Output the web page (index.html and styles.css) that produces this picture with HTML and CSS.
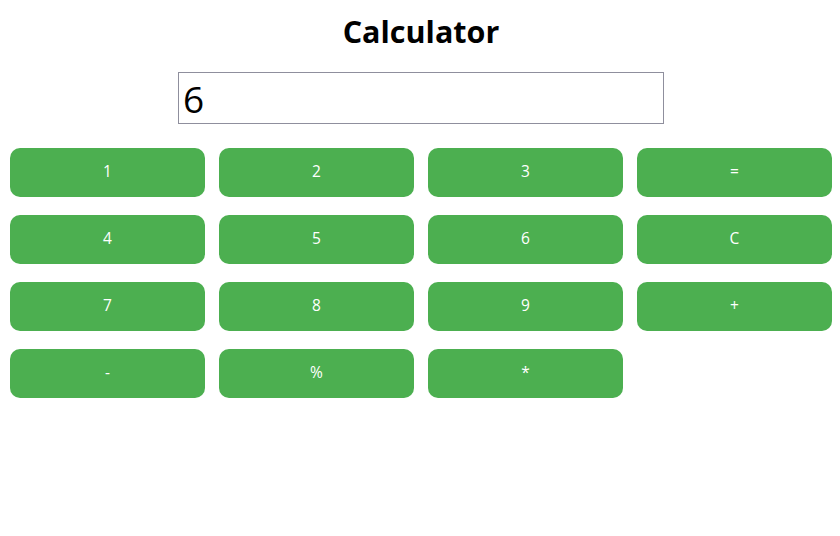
FILE: index.html
```html
<!DOCTYPE html>
<html>
<head>
<meta charset="utf-8">
<link rel="stylesheet" href="styles.css">
</head>
<body>
<div class="app">
  <h1 class="title">Calculator</h1>
  <div class="display-row"><input class="display" type="text" value="6"></div>
  <div class="keys">
    <button class="key">1</button>
    <button class="key">2</button>
    <button class="key">3</button>
    <button class="key">=</button>
    <button class="key">4</button>
    <button class="key">5</button>
    <button class="key">6</button>
    <button class="key">C</button>
    <button class="key">7</button>
    <button class="key">8</button>
    <button class="key">9</button>
    <button class="key">+</button>
    <button class="key">-</button>
    <button class="key">%</button>
    <button class="key">*</button>
  </div>
</div>
</body>
</html>
```
FILE: styles.css
```css
html, body {
  margin: 0;
  padding: 0;
  background: #ffffff;
}
body {
  font-family: "Open Sans", "DejaVu Sans", sans-serif;
  color: #000;
}
.app {
  padding: 0 8px 0 10px;
}
.title {
  margin: 0;
  padding-top: 11px;
  height: 41px;
  line-height: 40px;
  text-align: center;
  font-size: 30.5px;
  font-weight: 700;
}
.display-row {
  display: flex;
  justify-content: center;
  margin-top: 20px;
}
.display {
  box-sizing: border-box;
  width: 486px;
  height: 52px;
  border: 1px solid #8f8f9d;
  border-radius: 0;
  padding: 0 4px;
  font-family: "Open Sans", "DejaVu Sans", sans-serif;
  font-size: 37px;
  color: #000;
  outline: none;
}
.keys {
  display: grid;
  grid-template-columns: repeat(4, 195px);
  column-gap: 14px;
  row-gap: 18px;
  margin-top: 24px;
}
.key {
  height: 49px;
  border: none;
  border-radius: 10px;
  background: #4caf50;
  color: #ffffff;
  font-family: "Open Sans", "DejaVu Sans", sans-serif;
  font-size: 15.5px;
  padding: 0 0 4px 0;
}
```
